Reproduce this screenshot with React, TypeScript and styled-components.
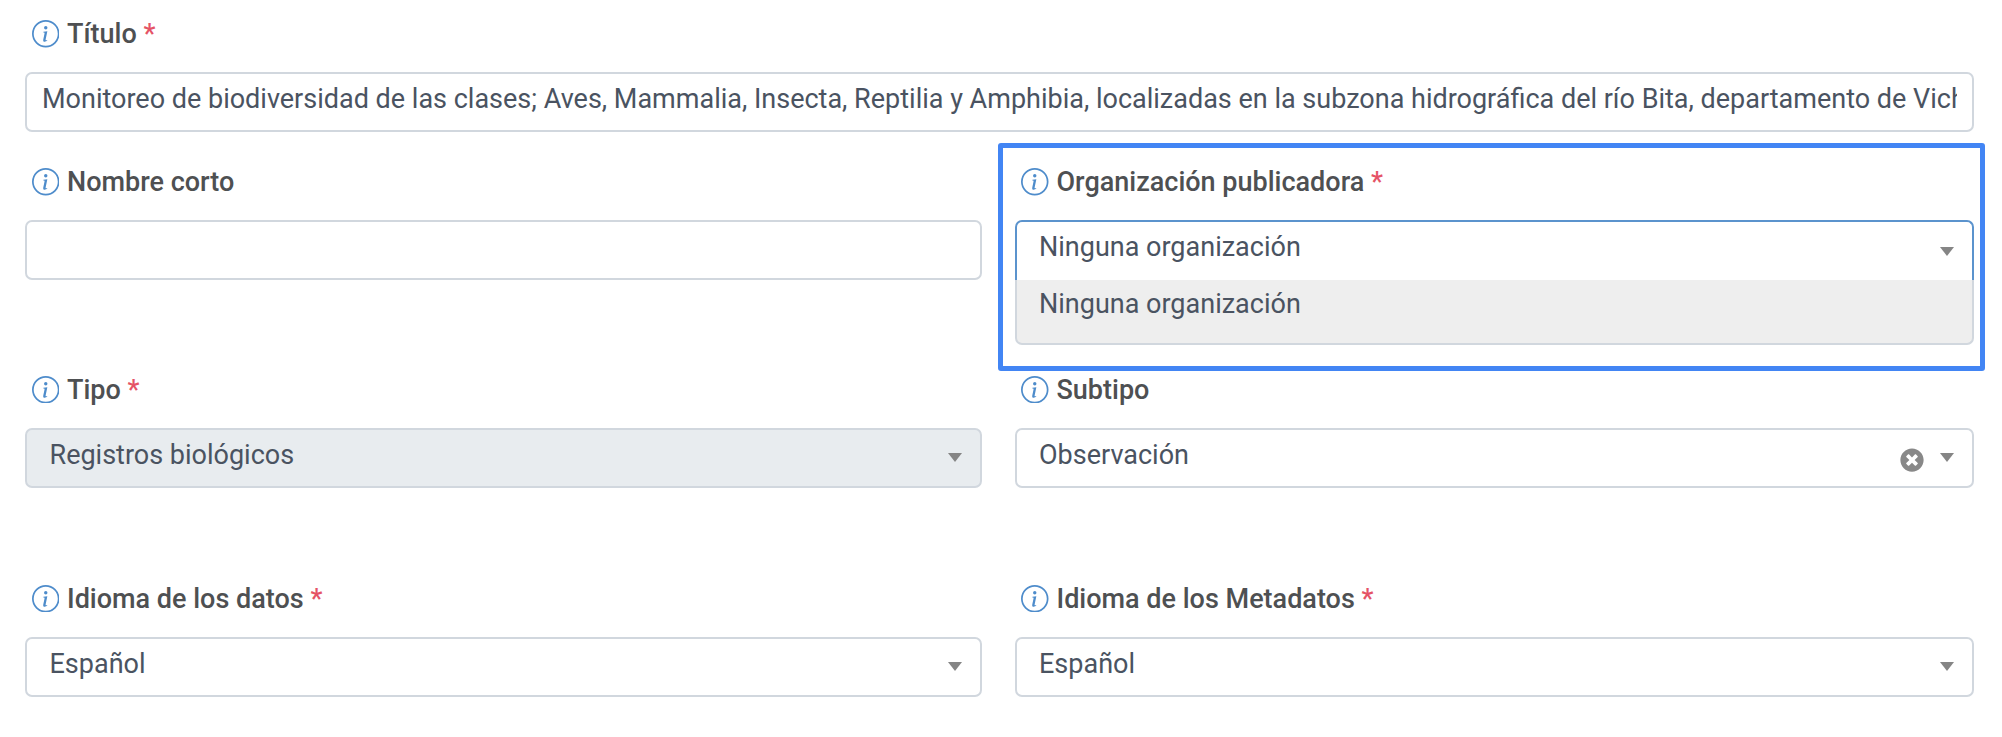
import React from "react";
import styled, { createGlobalStyle, css } from "styled-components";
import { BsInfoCircle } from "react-icons/bs";
import { FaTimesCircle } from "react-icons/fa";

const GlobalStyle = createGlobalStyle`
  *, *::before, *::after { box-sizing: border-box; }
  html, body { margin: 0; background: #fff; overflow: hidden; }
  body { font-family: Roboto, "Liberation Sans", sans-serif; font-size: 27px; }
`;

const Form = styled.form`
  width: 2002px;
  height: 737px;
  padding: 0 28.5px 0 25px;
`;

const Row = styled.div<{ $height: number }>`
  display: grid;
  grid-template-columns: 957px 959px;
  justify-content: space-between;
  align-items: start;
  height: ${(p) => p.$height}px;
`;

const Field = styled.div<{ $wide?: boolean }>`
  position: relative;
  min-width: 0;
  ${(p) => p.$wide && css`grid-column: 1 / -1;`}
`;

const Label = styled.label`
  display: flex;
  align-items: center;
  height: 72px;
  padding: 0 0 4px 6.5px;
  font-weight: 500;
  line-height: 32px;
  color: #4e5052;
  white-space: pre;
`;

const InfoIcon = styled(BsInfoCircle)`
  flex: none;
  width: 27.5px;
  height: 27.5px;
  margin-right: 8px;
  color: #4e8ccb;
`;

const Required = styled.span`
  color: #e55366;
`;

const controlBox = css`
  width: 100%;
  height: 60px;
  border: 2px solid #d1d7de;
  border-radius: 7px;
  background: #fff;
  font: inherit;
  line-height: 32px;
  color: #4a5361;
`;

const TextInput = styled.input`
  ${controlBox}
  display: block;
  padding: 9px 15px 15px;
  outline: none;
`;

const SelectBox = styled.div<{ $open?: boolean; $disabled?: boolean }>`
  ${controlBox}
  display: flex;
  align-items: center;
  padding: 0 18px 0 22.5px;
  ${(p) => p.$disabled && css`background: #e8ecef;`}
  ${(p) =>
    p.$open &&
    css`
      border-color: #5b93cd;
      border-bottom-color: transparent;
      border-bottom-width: 0;
      border-radius: 7px 7px 0 0;
    `}
`;

const Value = styled.span`
  flex: 1;
  align-self: flex-start;
  padding-top: 9px;
`;

const Caret = styled.span`
  width: 0;
  height: 0;
  border: solid transparent;
  border-width: 9px 7px 0;
  border-top-color: #858585;
`;

const ClearIcon = styled(FaTimesCircle)`
  width: 24px;
  height: 24px;
  margin: 4px 16px 0 0;
  color: #888;
`;

const Menu = styled.div`
  height: 65px;
  padding: 8px 22.5px 0;
  border: 2px solid #d1d7de;
  border-top: 0;
  border-radius: 0 0 7px 7px;
  background: #eee;
  line-height: 32px;
  color: #4a5361;
`;

const Highlight = styled.div`
  position: absolute;
  inset: -5.5px -11.5px auto -16.5px;
  height: 228px;
  border: 5px solid #4285f4;
  border-radius: 3px;
  pointer-events: none;
`;

function FieldLabel({ text, required }: { text: string; required?: boolean }) {
  return (
    <Label>
      <InfoIcon />
      {text}
      {required && <Required> *</Required>}
    </Label>
  );
}

interface SelectProps {
  label: string;
  value: string;
  required?: boolean;
  disabled?: boolean;
  clearable?: boolean;
  options?: string[];
}

function SelectField({ label, value, required, disabled, clearable, options }: SelectProps) {
  return (
    <Field>
      <FieldLabel text={label} required={required} />
      <SelectBox $open={!!options} $disabled={disabled}>
        <Value>{value}</Value>
        {clearable && <ClearIcon />}
        <Caret />
      </SelectBox>
      {options && (
        <Menu>
          {options.map((o) => (
            <div key={o}>{o}</div>
          ))}
        </Menu>
      )}
      {options && <Highlight />}
    </Field>
  );
}

export default function App() {
  return (
    <>
      <GlobalStyle />
      <Form>
        <Row $height={148}>
          <Field $wide>
            <FieldLabel text="Título" required />
            <TextInput defaultValue="Monitoreo de biodiversidad de las clases; Aves, Mammalia, Insecta, Reptilia y Amphibia, localizadas en la subzona hidrográfica del río Bita, departamento de Vichada" />
          </Field>
        </Row>
        <Row $height={207.5}>
          <Field>
            <FieldLabel text="Nombre corto" />
            <TextInput />
          </Field>
          <SelectField
            label="Organización publicadora"
            value="Ninguna organización"
            required
            options={["Ninguna organización"]}
          />
        </Row>
        <Row $height={209}>
          <SelectField label="Tipo" value="Registros biológicos" required disabled />
          <SelectField label="Subtipo" value="Observación" clearable />
        </Row>
        <Row $height={172.5}>
          <SelectField label="Idioma de los datos" value="Español" required />
          <SelectField label="Idioma de los Metadatos" value="Español" required />
        </Row>
      </Form>
    </>
  );
}
